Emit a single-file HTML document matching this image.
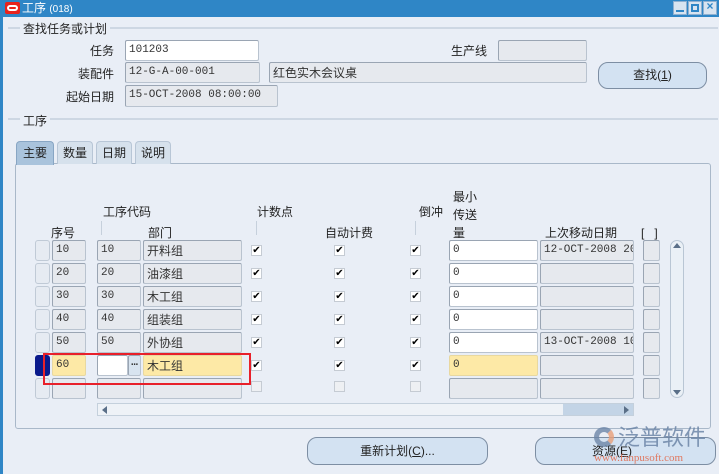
<!DOCTYPE html>
<html><head><meta charset="utf-8"><style>
*{box-sizing:border-box;margin:0;padding:0}
body{width:719px;height:474px;overflow:hidden;background:#e9eef6;font-family:"Liberation Mono","Noto Sans CJK SC",monospace;font-size:12px;color:#222;position:relative}
.a{position:absolute}
.t{position:absolute;font-family:"Liberation Sans","Noto Sans CJK SC",sans-serif;font-size:12px;white-space:nowrap;line-height:14px}
.f{position:absolute;height:21px;border:1px solid #b9c3cf;border-top-color:#9aa5b3;border-left-color:#9aa5b3;background:#e6e9ee;border-radius:2px;padding-left:3px;line-height:19px;font-size:11px;color:#333;white-space:nowrap;overflow:hidden}
.c{font-family:"Noto Sans CJK SC",sans-serif;font-size:12px}
.w{background:#fff}
.y{background:#fde9a6}
.cb{position:absolute;width:11px;height:11px;border:1px solid #c5cbd3;background:#fff;font-size:10px;line-height:9px;text-align:center;color:#000;font-family:"DejaVu Sans",sans-serif}
.line{position:absolute;height:2px;background:#cdd7e3}
.btn{position:absolute;border:1px solid #7d8ea3;border-radius:10px;background:#d3e2f2;text-align:center;font-family:"Liberation Sans","Noto Sans CJK SC",sans-serif;font-size:12px}
.tab{position:absolute;top:141px;height:23px;border:1px solid #b8c6d6;border-bottom:none;border-radius:4px 4px 0 0;background:#d6e1ec;text-align:center;line-height:22px;font-family:"Noto Sans CJK SC",sans-serif;font-size:12px}
.sel{position:absolute;left:35px;width:15px;height:21px;border:1px solid #c0cad6;border-radius:3px;background:#e6ebf2}
</style></head><body>
<div class="a" style="left:0;top:0;width:719px;height:17px;background:#2f86c6"></div>
<div class="a" style="left:0;top:0;width:3px;height:474px;background:#2f86c6"></div>
<div class="a" style="left:5px;top:2px;width:15px;height:12px;background:#e8231c;border-radius:2px"></div>
<div class="a" style="left:7px;top:5px;width:11px;height:6px;border:2px solid #fff;border-radius:4px"></div>
<div class="t" style="left:22px;top:1px;color:#fff">工序 <span style="font-size:10px">(018)</span></div>
<div class="a" style="left:673px;top:1px;width:14px;height:14px;background:#d8e4f0;border:1px solid #8fb0d0"></div>
<div class="a" style="left:676px;top:10px;width:8px;height:2px;background:#2f86c6"></div>
<div class="a" style="left:688px;top:1px;width:14px;height:14px;background:#d8e4f0;border:1px solid #8fb0d0"></div>
<div class="a" style="left:691px;top:4px;width:8px;height:8px;border:2px solid #2f86c6"></div>
<div class="a" style="left:703px;top:1px;width:14px;height:14px;background:#d8e4f0;border:1px solid #8fb0d0;color:#2f86c6;font-size:12px;line-height:11px;text-align:center;font-weight:bold">×</div>

<div class="line" style="left:8px;top:27px;width:710px"></div>
<div class="t" style="left:20px;top:22px;background:#e9eef6;padding:0 3px">查找任务或计划</div>
<div class="t" style="left:90px;top:44px">任务</div>
<div class="f w" style="left:125px;top:40px;width:134px">101203</div>
<div class="t" style="left:78px;top:67px">装配件</div>
<div class="f" style="left:125px;top:62px;width:135px">12-G-A-00-001</div>
<div class="f c" style="left:269px;top:62px;width:318px">红色实木会议桌</div>
<div class="t" style="left:66px;top:90px">起始日期</div>
<div class="f" style="left:125px;top:85px;width:153px;height:22px">15-OCT-2008 08:00:00</div>
<div class="t" style="left:451px;top:44px">生产线</div>
<div class="f" style="left:498px;top:40px;width:89px"></div>
<div class="btn" style="left:598px;top:62px;width:109px;height:27px;line-height:25px">查找(<u>1</u>)</div>

<div class="line" style="left:8px;top:118px;width:710px"></div>
<div class="t" style="left:20px;top:114px;background:#e9eef6;padding:0 3px">工序</div>

<div class="a" style="left:15px;top:163px;width:696px;height:266px;border:1px solid #a9b8c9;border-radius:3px"></div>
<div class="tab" style="left:16px;width:38px;background:#a9c3dc;border-color:#88a6c4;height:24px">主要</div>
<div class="tab" style="left:57px;width:36px">数量</div>
<div class="tab" style="left:96px;width:36px">日期</div>
<div class="tab" style="left:135px;width:36px">说明</div>

<div class="t" style="left:103px;top:205px">工序代码</div>
<div class="t" style="left:257px;top:205px">计数点</div>
<div class="t" style="left:51px;top:226px">序号</div>
<div class="t" style="left:148px;top:226px">部门</div>
<div class="t" style="left:325px;top:226px">自动计费</div>
<div class="t" style="left:419px;top:205px">倒冲</div>
<div class="t" style="left:453px;top:190px">最小</div>
<div class="t" style="left:453px;top:208px">传送</div>
<div class="t" style="left:453px;top:226px">量</div>
<div class="t" style="left:545px;top:226px">上次移动日期</div>
<div class="t" style="left:641px;top:226px">[&nbsp;&nbsp;&nbsp;]</div>
<div class="a" style="left:101px;top:221px;width:1px;height:14px;background:#c6d0dc"></div>
<div class="a" style="left:256px;top:221px;width:1px;height:14px;background:#c6d0dc"></div>
<div class="a" style="left:415px;top:221px;width:1px;height:14px;background:#c6d0dc"></div>

<div class="sel" style="top:240px"></div>
<div class="f" style="left:52px;top:240px;width:34px">10</div>
<div class="f" style="left:97px;top:240px;width:44px">10</div>
<div class="f c" style="left:143px;top:240px;width:99px">开料组</div>
<div class="cb" style="left:251px;top:245px">✔</div><div class="cb" style="left:334px;top:245px">✔</div><div class="cb" style="left:410px;top:245px">✔</div>
<div class="f w" style="left:449px;top:240px;width:89px">0</div>
<div class="f" style="left:540px;top:240px;width:94px">12-OCT-2008 20</div>
<div class="f" style="left:643px;top:240px;width:17px"></div>

<div class="sel" style="top:263px"></div>
<div class="f" style="left:52px;top:263px;width:34px">20</div>
<div class="f" style="left:97px;top:263px;width:44px">20</div>
<div class="f c" style="left:143px;top:263px;width:99px">油漆组</div>
<div class="cb" style="left:251px;top:268px">✔</div><div class="cb" style="left:334px;top:268px">✔</div><div class="cb" style="left:410px;top:268px">✔</div>
<div class="f w" style="left:449px;top:263px;width:89px">0</div>
<div class="f" style="left:540px;top:263px;width:94px"></div>
<div class="f" style="left:643px;top:263px;width:17px"></div>

<div class="sel" style="top:286px"></div>
<div class="f" style="left:52px;top:286px;width:34px">30</div>
<div class="f" style="left:97px;top:286px;width:44px">30</div>
<div class="f c" style="left:143px;top:286px;width:99px">木工组</div>
<div class="cb" style="left:251px;top:291px">✔</div><div class="cb" style="left:334px;top:291px">✔</div><div class="cb" style="left:410px;top:291px">✔</div>
<div class="f w" style="left:449px;top:286px;width:89px">0</div>
<div class="f" style="left:540px;top:286px;width:94px"></div>
<div class="f" style="left:643px;top:286px;width:17px"></div>

<div class="sel" style="top:309px"></div>
<div class="f" style="left:52px;top:309px;width:34px">40</div>
<div class="f" style="left:97px;top:309px;width:44px">40</div>
<div class="f c" style="left:143px;top:309px;width:99px">组装组</div>
<div class="cb" style="left:251px;top:314px">✔</div><div class="cb" style="left:334px;top:314px">✔</div><div class="cb" style="left:410px;top:314px">✔</div>
<div class="f w" style="left:449px;top:309px;width:89px">0</div>
<div class="f" style="left:540px;top:309px;width:94px"></div>
<div class="f" style="left:643px;top:309px;width:17px"></div>

<div class="sel" style="top:332px"></div>
<div class="f" style="left:52px;top:332px;width:34px">50</div>
<div class="f" style="left:97px;top:332px;width:44px">50</div>
<div class="f c" style="left:143px;top:332px;width:99px">外协组</div>
<div class="cb" style="left:251px;top:337px">✔</div><div class="cb" style="left:334px;top:337px">✔</div><div class="cb" style="left:410px;top:337px">✔</div>
<div class="f w" style="left:449px;top:332px;width:89px">0</div>
<div class="f" style="left:540px;top:332px;width:94px">13-OCT-2008 10</div>
<div class="f" style="left:643px;top:332px;width:17px"></div>

<div class="sel" style="top:355px;background:#0a1a8c;border-color:#0a1a8c"></div>
<div class="f y" style="left:52px;top:355px;width:34px;border-color:#e8d8a0">60</div>
<div class="f w" style="left:97px;top:355px;width:31px"></div>
<div class="f" style="left:128px;top:355px;width:13px;padding:0;text-align:center;background:#d8e4f0;font-weight:bold;line-height:15px">…</div>
<div class="f c y" style="left:143px;top:355px;width:99px;border-color:#e8d8a0">木工组</div>
<div class="cb" style="left:251px;top:360px">✔</div><div class="cb" style="left:334px;top:360px">✔</div><div class="cb" style="left:410px;top:360px">✔</div>
<div class="f y" style="left:449px;top:355px;width:89px;border-color:#e8d8a0">0</div>
<div class="f" style="left:540px;top:355px;width:94px"></div>
<div class="f" style="left:643px;top:355px;width:17px"></div>

<div class="sel" style="top:378px"></div>
<div class="f" style="left:52px;top:378px;width:34px"></div>
<div class="f" style="left:97px;top:378px;width:44px"></div>
<div class="f" style="left:143px;top:378px;width:99px"></div>
<div class="cb" style="left:251px;top:381px;background:#eef0f3"></div><div class="cb" style="left:334px;top:381px;background:#eef0f3"></div><div class="cb" style="left:410px;top:381px;background:#eef0f3"></div>
<div class="f" style="left:449px;top:378px;width:89px"></div>
<div class="f" style="left:540px;top:378px;width:94px"></div>
<div class="f" style="left:643px;top:378px;width:17px"></div>

<div class="a" style="left:43px;top:353px;width:208px;height:32px;border:2px solid #e8202a"></div>

<div class="a" style="left:670px;top:240px;width:14px;height:158px;border:1px solid #b9c6d4;border-radius:7px;background:#eaf0f6"></div>
<div class="a" style="left:673px;top:243px;width:0;height:0;border-left:4px solid transparent;border-right:4px solid transparent;border-bottom:5px solid #5a6f88"></div>
<div class="a" style="left:673px;top:390px;width:0;height:0;border-left:4px solid transparent;border-right:4px solid transparent;border-top:5px solid #5a6f88"></div>

<div class="a" style="left:97px;top:403px;width:537px;height:13px;border:1px solid #c4d0dc;background:#eef2f7"></div>
<div class="a" style="left:563px;top:404px;width:70px;height:11px;background:#c3d4e6"></div>
<div class="a" style="left:102px;top:406px;width:0;height:0;border-top:4px solid transparent;border-bottom:4px solid transparent;border-right:5px solid #5a6f88"></div>
<div class="a" style="left:624px;top:406px;width:0;height:0;border-top:4px solid transparent;border-bottom:4px solid transparent;border-left:5px solid #5a6f88"></div>

<div class="btn" style="left:307px;top:437px;width:181px;height:28px;line-height:26px">重新计划(<u>C</u>)...</div>
<div class="btn" style="left:535px;top:437px;width:181px;height:28px;line-height:26px;text-align:left;padding-left:56px">资源(<u>E</u>)</div>

<div class="a" style="left:594px;top:427px;width:20px;height:20px;border-radius:50%;border:5px solid #6d86a8;border-right-color:#e9a07a;opacity:.8"></div>
<div class="t" style="left:618px;top:423px;font-size:22px;line-height:26px;color:#6d86a8;opacity:.85;font-family:'Noto Sans CJK SC',sans-serif">泛普软件</div>
<div class="t" style="left:594px;top:451px;font-size:11px;color:#e07860;font-family:'Liberation Serif',serif">www.fanpusoft.com</div>
</body></html>
